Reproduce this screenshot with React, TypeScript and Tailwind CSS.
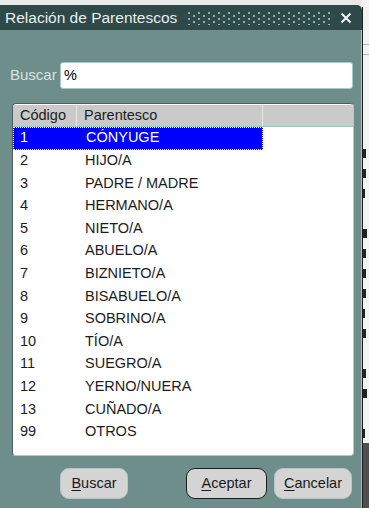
const rows: [string, string][] = [
  ["1", "CÓNYUGE"],
  ["2", "HIJO/A"],
  ["3", "PADRE / MADRE"],
  ["4", "HERMANO/A"],
  ["5", "NIETO/A"],
  ["6", "ABUELO/A"],
  ["7", "BIZNIETO/A"],
  ["8", "BISABUELO/A"],
  ["9", "SOBRINO/A"],
  ["10", "TÍO/A"],
  ["11", "SUEGRO/A"],
  ["12", "YERNO/NUERA"],
  ["13", "CUÑADO/A"],
  ["99", "OTROS"],
];

// clipped glyph fragments of the window behind the dialog
const behind = [0, 0, 0, 0, 3, 4, 2, 0, 5, 4, 4, 3, 2, 4, 0, 4, 5, 0, 2];

function Grip() {
  return (
    <svg width="146" height="14" className="ml-[10px]">
      <defs>
        <pattern id="dots" width="10" height="6" patternUnits="userSpaceOnUse">
          <rect x="1" y="1" width="2" height="2" fill="#7fb4b4" />
          <rect x="6" y="4" width="2" height="2" fill="#7fb4b4" />
        </pattern>
      </defs>
      <rect width="146" height="14" fill="url(#dots)" />
    </svg>
  );
}

function Btn({ label, def, w }: { label: string; def?: boolean; w: string }) {
  return (
    <button
      className={`${w} h-[31px] rounded-[9px] bg-[#d4d4d4] text-[14.5px] text-[#1a1a1a] border ${
        def ? "border-[#1c1c1c]" : "border-[#b9c4c4]"
      }`}
    >
      <span className="underline underline-offset-2">{label[0]}</span>
      {label.slice(1)}
    </button>
  );
}

export default function App() {
  return (
    <div
      className="flex w-[369px] h-[508px] bg-[#f2f2f2] overflow-hidden"
      style={{ fontFamily: '"Liberation Sans", Arial, sans-serif' }}
    >
      <div className="flex flex-col w-[362px] shrink-0">
        <div className="h-[5px] bg-[#e9e9e9]" />
        <div className="flex items-center h-[25px] bg-[#2f4848] rounded-tr-[5px] pl-[5px] pr-[10px]">
          <span className="text-[15.5px] text-[#e8eeee] whitespace-nowrap">Relación de Parentescos</span>
          <Grip />
          <svg width="12" height="12" className="ml-auto" viewBox="0 0 12 12">
            <path d="M1.5 1.5 L10.5 10.5 M10.5 1.5 L1.5 10.5" stroke="#f4f4f4" strokeWidth="2" />
          </svg>
        </div>
        <div className="flex-1 flex flex-col bg-[#6e8e8b] border-r border-r-[#9ec2c0] pl-[10px] pr-[8px]">
          <div className="flex items-center mt-[32px]">
            <span className="w-[50px] text-[15px] text-[#d6e2e2]">Buscar</span>
            <div className="flex items-center w-[293px] h-[27px] bg-white border border-[#a3cccb] rounded-[3px] pl-[3px] text-[14.5px] text-black">
              %
            </div>
          </div>
          <div className="ml-[2px] mt-[14px] w-[342px] h-[353px] bg-white rounded-[4px] border border-[#4e5e5e] border-r-[#a6cfcd] border-b-[#a6cfcd] overflow-hidden pt-[1px]">
            <div className="flex h-[22px] bg-[#cacaca] text-[14.5px] text-[#1c1c1c] border-b border-b-[#9fc7c5]">
              <div className="w-[64px] pl-[7px] flex items-center border-r border-r-[#e8e8e8]">Código</div>
              <div className="w-[186px] pl-[7px] flex items-center border-r border-r-[#e8e8e8]">Parentesco</div>
              <div className="flex-1" />
            </div>
            {rows.map(([c, d], i) => (
              <div key={c} className="flex h-[22.6px] text-[14.5px]">
                <div
                  className={`flex w-[250px] items-center ${
                    i === 0 ? "bg-[#0000ff] text-white border border-dotted border-white" : "text-[#1c1c1c]"
                  }`}
                >
                  <span className={`w-[72px] ${i === 0 ? "pl-[6px]" : "pl-[7px]"}`}>{c}</span>
                  <span>{d}</span>
                </div>
              </div>
            ))}
          </div>
          <div className="flex items-center mt-[12px]">
            <div className="ml-[50px] flex">
              <Btn label="Buscar" w="w-[68px]" />
            </div>
            <div className="ml-[58px] flex">
              <Btn label="Aceptar" def w="w-[81px]" />
            </div>
            <div className="ml-[7px] flex">
              <Btn label="Cancelar" w="w-[78px]" />
            </div>
          </div>
        </div>
      </div>
      <div className="w-px bg-[#1e1e1e] mt-[7px]" />
      <div className="flex-1 flex flex-col overflow-hidden">
        <div className="h-[45px] border-b border-b-[#8fc0c0]" />
        <div className="h-[10px] border-b border-b-[#8fc0c0]" />
        <div className="h-[8px]" />
        {behind.map((n, i) => (
          <div key={i} className="h-[20px] flex items-center">
            {n > 0 && <div className="bg-[#222]" style={{ width: n / 2 + 1, height: 9 }} />}
          </div>
        ))}
        <div className="flex-1 bg-[#505050]" />
      </div>
    </div>
  );
}
